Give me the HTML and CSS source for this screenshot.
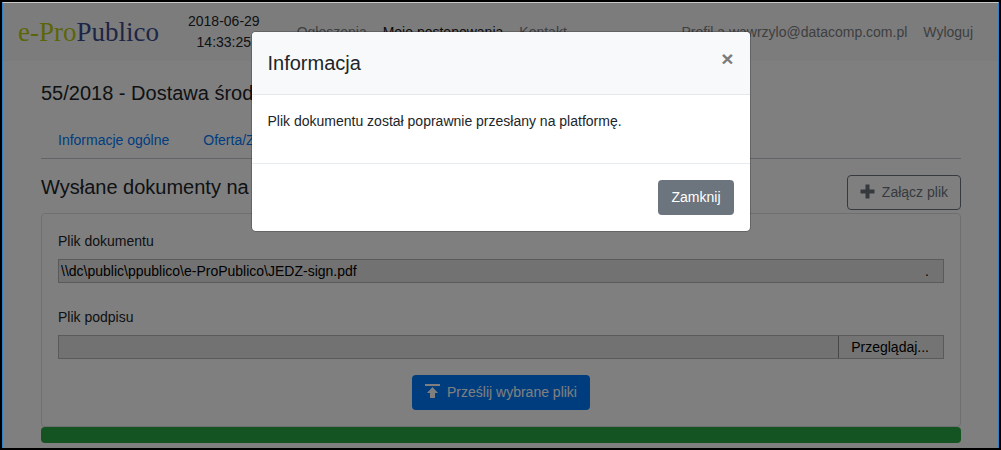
FILE: index.html
```html
<!DOCTYPE html>
<html lang="pl">
<head>
    <meta charset="UTF-8">
    <meta name="viewport" content="width=device-width, initial-scale=1.0">
    <title>e-ProPublico</title>
    <link rel="stylesheet" href="styles.css">
</head>
<body>
    <div class="window">
        <header class="navbar">
            <a class="brand" href="#"><span class="brand-green">e-Pro</span>Publico</a>
            <div class="clock">2018-06-29<br>14:33:25</div>
            <nav class="nav">
                <a href="#">Ogłoszenia</a>
                <a class="active" href="#">Moje postępowania</a>
                <a href="#">Kontakt</a>
            </nav>
            <nav class="nav nav-right">
                <a href="#">Profil a.wawrzylo@datacomp.com.pl</a>
                <a href="#">Wyloguj</a>
            </nav>
        </header>

        <main class="container">
            <h1>55/2018 - Dostawa środków</h1>
            <nav class="tabs">
                <a href="#">Informacje ogólne</a>
                <a href="#">Oferta/Załączniki</a>
            </nav>

            <div class="section-header">
                <h2>Wysłane dokumenty na platformę</h2>
                <button type="button" class="btn btn-outline">
                    <svg width="15" height="17" viewBox="0 0 15 17" aria-hidden="true"><path fill="currentColor" d="M5.500 0.500h4v5h5v4h-5v5h-4v-5h-5v-4h5z"/></svg>
                    Załącz plik
                </button>
            </div>

            <form class="card">
                <label for="plikDokumentu">Plik dokumentu</label>
                <div class="file">
                    <input type="text" id="plikDokumentu" value="\\dc\public\ppublico\e-ProPublico\JEDZ-sign.pdf" readonly>
                    <button type="button" class="browse-short" aria-label="Przeglądaj">.</button>
                </div>
                <label for="plikPodpisu">Plik podpisu</label>
                <div class="file">
                    <input type="text" id="plikPodpisu" readonly>
                    <button type="button" class="browse">Przeglądaj...</button>
                </div>
                <button type="button" class="btn btn-primary">
                    <svg width="15" height="17" viewBox="0 0 15 17" aria-hidden="true"><path fill="currentColor" d="M0 0h15v2H0zM7.500 3l5.500 6H10v5H5V9H2z"/></svg>
                    Prześlij wybrane pliki
                </button>
            </form>
            <div class="progress"></div>
        </main>

        <div class="backdrop">
            <div class="modal" role="dialog" aria-labelledby="modalTytul">
                <div class="modal-header">
                    <h2 id="modalTytul">Informacja</h2>
                    <button type="button" class="close" aria-label="Zamknij okno">×</button>
                </div>
                <div class="modal-body">
                    <p>Plik dokumentu został poprawnie przesłany na platformę.</p>
                </div>
                <div class="modal-footer">
                    <button type="button" class="btn btn-secondary">Zamknij</button>
                </div>
            </div>
        </div>
    </div>
</body>
</html>
```

FILE: styles.css
```css
* {
    box-sizing: border-box;
}
body {
    min-height: 100vh;
    margin: 0;
    border: 2px solid #000;
    display: flex;
    font-family: "Liberation Sans", Arial, sans-serif;
    font-size: 14px;
    line-height: 21px;
    color: #212529;
}
h1, h2, p {
    margin: 0;
}
h1, h2 {
    font-size: 20px;
    font-weight: normal;
    line-height: 24px;
}
a {
    color: #007bff;
    text-decoration: none;
}
button, input {
    font: inherit;
}
.window {
    position: relative;
    flex: 1;
    border: 1px solid #2f7fc4;
    border-top-color: #c8c8c8;
    border-bottom: 0;
    background: #fff;
}
.navbar {
    display: flex;
    align-items: center;
    padding: 8px 17px 8px 15px;
    background: #f8f9fa;
}
.brand {
    font-family: "Liberation Serif", "Times New Roman", serif;
    font-size: 27px;
    line-height: 27px;
    color: #3c4a8c;
}
.brand-green {
    color: #b8cc10;
}
.clock {
    margin: 0 29px;
    text-align: center;
}
.nav {
    display: flex;
}
.nav a {
    padding: 0 8px;
    color: #7d7e7f;
}
.nav a.active {
    color: #181919;
}
.nav-right {
    margin-left: auto;
}
.container {
    padding: 20px 37px 5px 38px;
}
.tabs {
    display: flex;
    margin: 17px 0 16px;
    border-bottom: 1px solid #c4c9ce;
}
.tabs a {
    padding: 8px 17px 7px;
}
.section-header {
    display: flex;
    align-items: flex-start;
    justify-content: space-between;
    margin-bottom: 3px;
}
.btn {
    display: flex;
    align-items: center;
    gap: 7px;
    padding: 6px 12px;
    border: 1px solid transparent;
    border-radius: 4px;
    line-height: 21px;
    cursor: pointer;
}
.btn-outline {
    border-color: #6c757d;
    background: transparent;
    color: #6c757d;
}
.btn-primary {
    margin: 0 auto;
    background: #007bff;
    color: #fff;
}
.btn-secondary {
    background: #6c757d;
    color: #fff;
}
.card {
    padding: 17px 16px 16px;
    border: 1px solid #dfdfdf;
    border-radius: 4px;
}
.card label {
    display: block;
    margin-bottom: 7px;
}
.file {
    display: flex;
    height: 24px;
    margin-bottom: 24px;
    border: 1px solid #b4b4b4;
    background: #e4e4e4;
}
.file:nth-of-type(2) {
    margin-bottom: 16px;
}
.file input {
    flex: 1;
    min-width: 0;
    padding: 0 2px;
    border: 0;
    background: transparent;
    color: #000;
}
.file button {
    padding: 0 14px 0 12px;
    border: 0;
    background: transparent;
    color: #000;
}
.file .browse {
    border-left: 1px solid #909090;
    background: #e9e9e9;
}
.progress {
    height: 16px;
    border-radius: 4px;
    background: #28a745;
}
.backdrop {
    position: absolute;
    inset: 0;
    padding: 28px;
    background: rgba(0, 0, 0, 0.5);
}
.modal {
    max-width: 500px;
    margin: 0 auto;
    border: 1px solid rgba(0, 0, 0, 0.2);
    border-radius: 5px;
    background: #fff;
    background-clip: padding-box;
}
.modal-header {
    display: flex;
    align-items: flex-start;
    justify-content: space-between;
    padding: 16px;
    border-bottom: 1px solid #e4e8ec;
    border-radius: 4px 4px 0 0;
    background: #f8f9fa;
}
.modal-header h2 {
    line-height: 30px;
}
.close {
    padding: 0;
    border: 0;
    background: transparent;
    color: #7c7c7c;
    font-size: 21px;
    font-weight: bold;
    line-height: 21px;
}
.modal-body {
    padding: 16px 16px 31px;
}
.modal-footer {
    display: flex;
    justify-content: flex-end;
    padding: 16px;
    border-top: 1px solid #e9ecef;
}
```
